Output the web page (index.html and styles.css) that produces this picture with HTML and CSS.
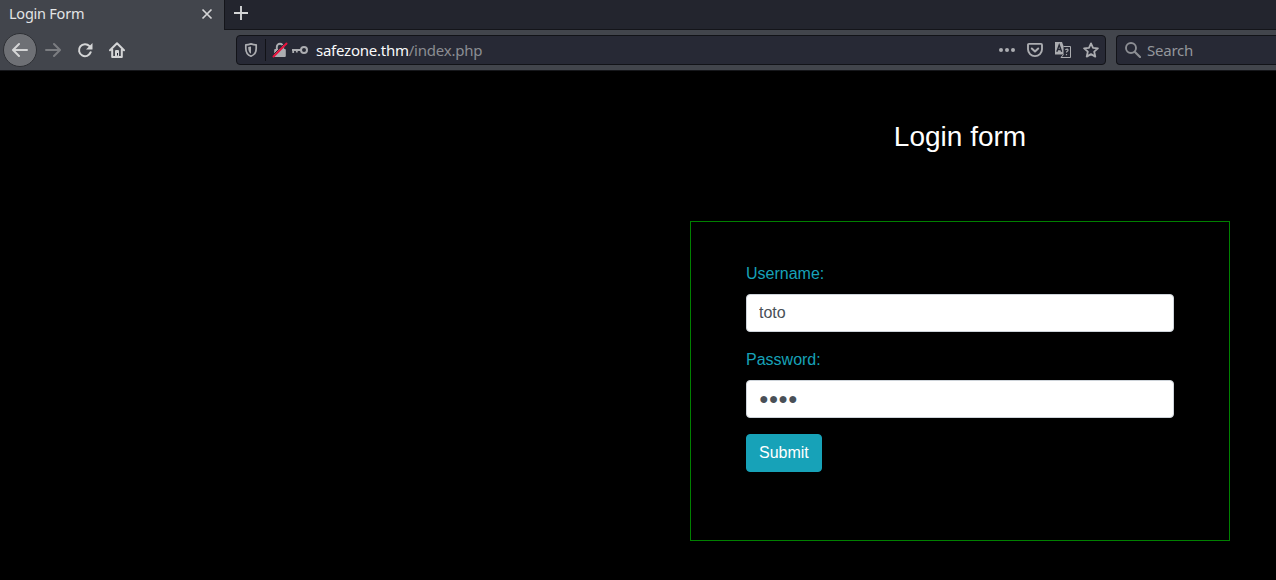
FILE: index.html
```html
<!DOCTYPE html>
<html lang="en">
<head>
<meta charset="utf-8">
<title>Login Form</title>
<link rel="stylesheet" href="styles.css">
</head>
<body>
<header class="browser">
  <div class="tabs">
    <div class="tab">
      <span class="tab-title">Login Form</span>
      <svg class="icon" width="16" height="16" viewBox="0 0 16 16"><path d="M3.500 3.500l9 9m0-9l-9 9" stroke-width="1.700"/></svg>
    </div>
    <svg class="icon new-tab" width="16" height="16" viewBox="0 0 16 16"><path d="M8 1v14M1 8h14" stroke-width="1.900"/></svg>
  </div>
  <div class="toolbar">
    <div class="nav">
      <span class="back"><svg class="icon" width="16" height="16" viewBox="0 0 16 16"><path d="M15 8H1.500M7 2L1 8l6 6" stroke-width="2" stroke-linecap="round" stroke-linejoin="round"/></svg></span>
      <svg class="icon disabled" width="16" height="16" viewBox="0 0 16 16"><path d="M1 8h13.500M9 2l6 6-6 6" stroke-width="2" stroke-linecap="round" stroke-linejoin="round"/></svg>
      <svg class="icon" width="16" height="16" viewBox="0 0 16 16"><path d="M12.500 4.200A6 6 0 1 0 13.700 10.200" stroke-width="2" stroke-linecap="round"/><path class="solid" d="M15.500 1v6q0 .5-.5.5H9z"/></svg>
      <svg class="icon" width="16" height="16" viewBox="0 0 16 16"><path d="M1 8.200L8 1.300l7 6.900M3.200 7.500V15h9.600V7.500" stroke-width="2" stroke-linecap="round" stroke-linejoin="round"/><path class="solid" d="M6 15V9q0-1 1-1h2q1 0 1 1v6z"/><path class="hole" d="M8.500 11v2.500" stroke-width="1"/></svg>
    </div>
    <div class="field address">
      <svg class="icon muted shield" width="16" height="16" viewBox="0 0 16 16"><path d="M8 1.900c2 .6 3.500.9 5.200 1v3.300c0 4.300-1.800 6.800-5.200 8-3.400-1.200-5.200-3.700-5.200-8V2.900c1.700-.1 3.200-.4 5.200-1z" stroke-width="1.700" stroke-linejoin="round"/><path class="solid" d="M8 4.500v7.300C6 10.500 5.200 8.800 5.200 5z"/></svg>
      <span class="divider"></span>
      <svg class="icon muted lock" width="16" height="16" viewBox="0 0 16 16"><path d="M4.800 8V5a3.200 3.200 0 0 1 6.400 0v3" stroke-width="1.900"/><rect class="solid" x="2.200" y="7" width="11.600" height="8" rx="1"/><path class="gap" d="M0 14L13 1" stroke-width="1"/><path class="slash" d="M1.500 14.500L14.500 1.500" stroke-width="2" stroke-linecap="round"/></svg>
      <svg class="icon muted key" width="16" height="16" viewBox="0 0 16 16"><circle cx="12" cy="8" r="3" stroke-width="2"/><path d="M9 8H0M1.200 8v3M4.800 8v2.500" stroke-width="1.800"/></svg>
      <span class="url"><span class="host">safezone.thm</span>/index.php</span>
      <div class="actions">
        <svg class="icon muted" width="16" height="16" viewBox="0 0 16 16"><g class="solid"><circle cx="2" cy="8" r="2"/><circle cx="8" cy="8" r="2"/><circle cx="14" cy="8" r="2"/></g></svg>
        <svg class="icon muted" width="16" height="16" viewBox="0 0 16 16"><path d="M2 1.900h12q1 0 1 1v4.400a7 6.800 0 0 1-14 0V2.900q0-1 1-1z" stroke-width="1.900"/><path d="M4.800 6.500L8 9.500l3.200-3" stroke-width="2" stroke-linecap="round" stroke-linejoin="round"/></svg>
        <svg class="icon muted" width="16" height="16" viewBox="0 0 16 16"><path class="solid" d="M0 0h7l1.500 4v8.500H0z"/><path class="hole" d="M1.800 9.800L4.200 3l2.500 6.800M2.600 7.500h3.200" stroke-width="1.400"/><path d="M8.500 4.500h7v11H6l2.500-3" stroke-width="1"/><path d="M10.300 7.700q2.700-1.500 2.700.5c0 1.200-1.500 1-1.500 2.300M11.500 12v1.300" stroke-width="1.200"/></svg>
        <svg class="icon muted" width="16" height="16" viewBox="0 0 16 16"><path d="M8 1.400l2 4.500 4.900.5-3.700 3.300 1.100 4.900L8 12.100l-4.300 2.500 1.100-4.900-3.700-3.300L6 5.900z" stroke-width="1.800" stroke-linejoin="round"/></svg>
      </div>
    </div>
    <div class="field search">
      <svg class="icon" width="16" height="16" viewBox="0 0 16 16"><circle cx="6" cy="6" r="5" stroke-width="1.900"/><path d="M9.700 9.700L15 15" stroke-width="2.200" stroke-linecap="round"/></svg>
      <span>Search</span>
    </div>
  </div>
</header>
<main class="page">
  <h3 class="heading">Login form</h3>
  <form class="login">
    <label class="label" for="username">Username:</label>
    <input class="control" id="username" type="text" value="toto">
    <label class="label" for="password">Password:</label>
    <input class="control" id="password" type="text" value="●●●●">
    <button class="submit" type="button">Submit</button>
  </form>
</main>
</body>
</html>
```
FILE: styles.css
```css
* { box-sizing: border-box; }
body {
  margin: 0;
  height: 580px;
  overflow: hidden;
  background: #000;
  font: 16px/24px "Liberation Sans", Arial, sans-serif;
}
.browser {
  font-family: "Noto Sans", sans-serif;
  font-size: 15px;
  letter-spacing: -0.24px;
}
.icon { flex: none; display: block; fill: none; stroke: #d4d5d6; color: #d4d5d6; }
.muted { stroke: #acadb1; color: #acadb1; }
.disabled { stroke: #7b7d81; }
.solid { fill: currentColor; stroke: none; }
.hole, .gap { stroke: #272935; }
.slash { stroke: #e8113d; }
.tabs { display: flex; height: 30px; background: #23252e; border-bottom: 1px solid #14151a; }
.tab {
  display: flex;
  align-items: center;
  justify-content: space-between;
  width: 225px;
  height: 30px;
  padding: 0 9px 2px 9px;
  background: #42454c;
  border-right: 1px solid #14151a;
  color: #e3e4e5;
  font-size: 14.5px;
}
.tab-title { padding-bottom: 2px; }
.new-tab { margin: 5px 0 0 8px; }
.toolbar {
  display: flex;
  align-items: center;
  height: 41px;
  background: #42454c;
  border-bottom: 1px solid #16171b;
}
.nav { display: flex; align-items: center; gap: 16px; width: 236px; padding-left: 3px; }
.back {
  display: flex;
  align-items: center;
  justify-content: center;
  width: 34px;
  height: 34px;
  margin-right: -8px;
  border: 1px solid #2e3035;
  border-radius: 50%;
  background: #6e7075;
}
.field {
  display: flex;
  align-items: center;
  height: 30px;
  background: #272935;
  border: 1px solid #121318;
  border-radius: 4px;
}
.address { width: 870px; padding: 0 6px; }
.divider { width: 1px; height: 22px; margin: 0 6px; background: #111217; }
.lock { margin-right: 4px; }
.url { margin-left: 8px; color: #8b8d92; }
.host { color: #f9f9fa; }
.actions { display: flex; gap: 12px; margin-left: auto; }
.search {
  flex: 1;
  gap: 6px;
  margin-left: 10px;
  padding-left: 8px;
  border-right: 0;
  border-radius: 4px 0 0 4px;
  color: #94969b;
}
.search .icon { stroke: #8c8e93; }
.page { width: 540px; margin: 49px 0 0 690px; }
.heading {
  margin: 0 0 67px;
  font-size: 28px;
  font-weight: 400;
  line-height: 34px;
  text-align: center;
  color: #fff;
}
.login { height: 320px; padding: 40px 55px; border: 1px solid #008000; }
.label { display: block; margin-bottom: 8px; color: #17a2b8; }
.control {
  display: block;
  width: 100%;
  height: 38px;
  margin: 0 0 16px;
  padding: 6px 12px;
  border: 1px solid #ced4da;
  border-radius: 4px;
  background: #fff;
  color: #495057;
  font: inherit;
}
.submit {
  height: 38px;
  padding: 6px 12px;
  border: 1px solid #17a2b8;
  border-radius: 4px;
  background: #17a2b8;
  color: #fff;
  font: inherit;
}
```
